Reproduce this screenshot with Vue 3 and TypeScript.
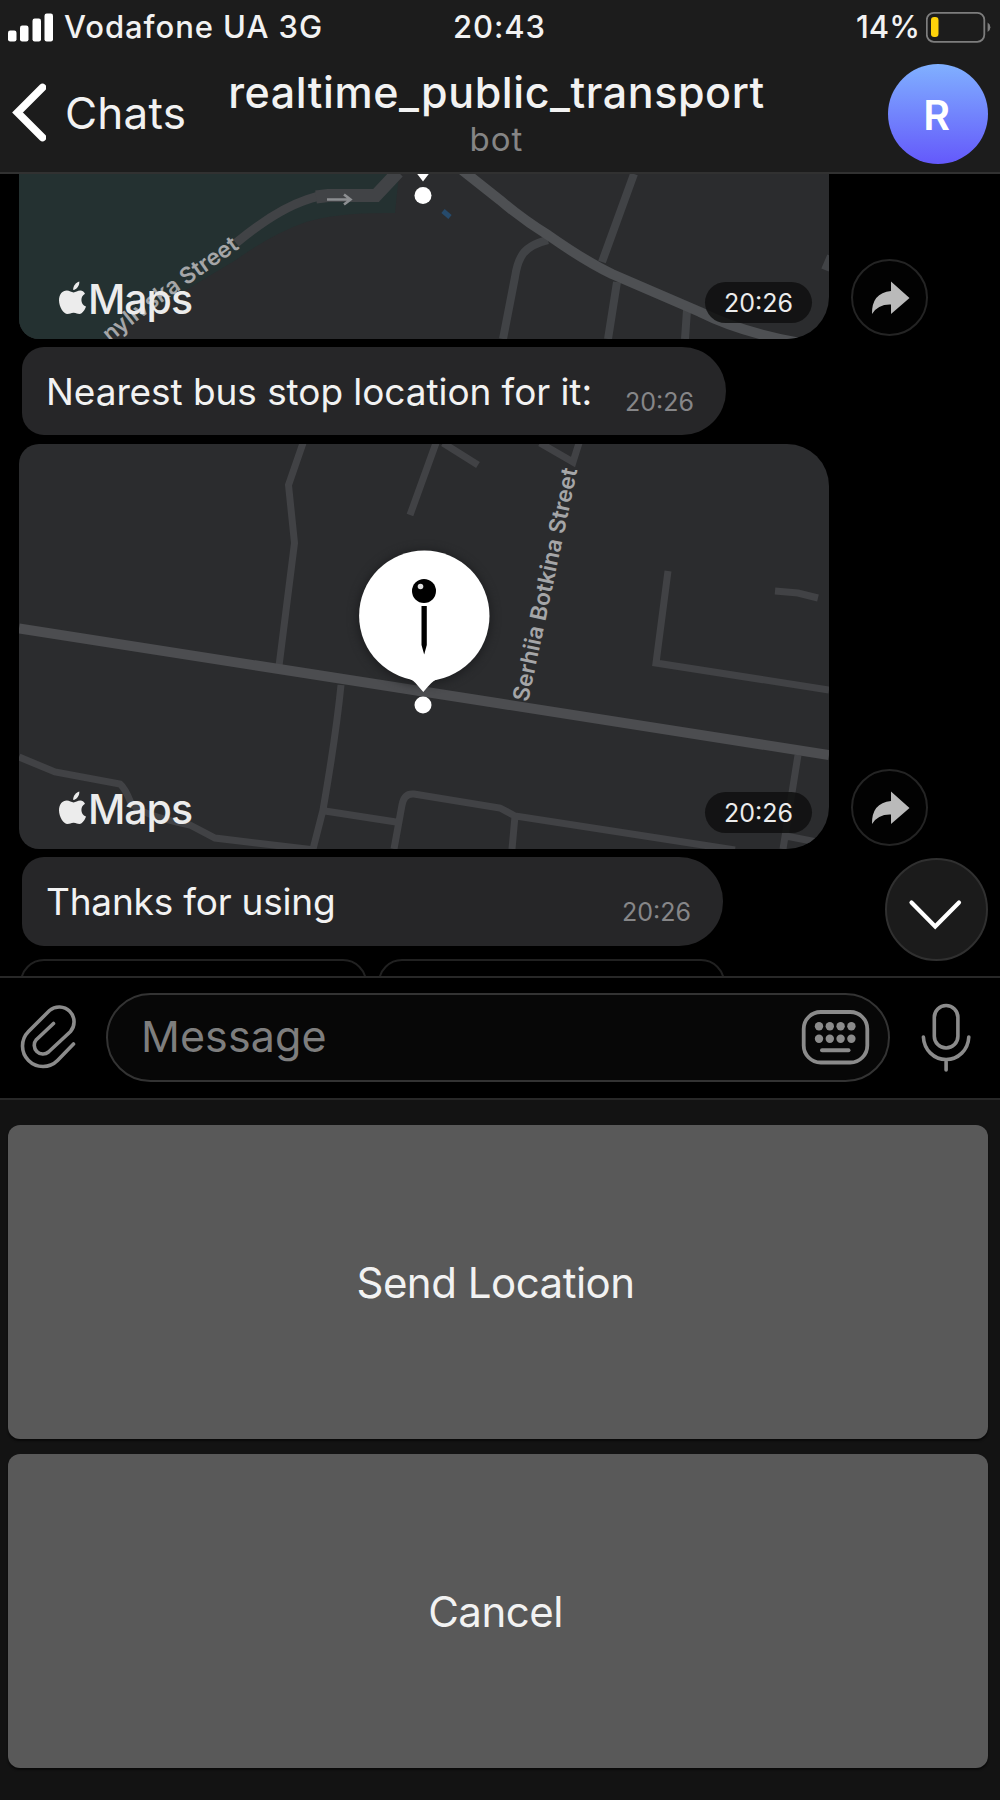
<script setup lang="ts">
interface KeyboardButton {
  id: string
  label: string
}

const keyboard: KeyboardButton[] = [
  { id: 'send', label: 'Send Location' },
  { id: 'cancel', label: 'Cancel' },
]

const keyDots: { x: number; y: number }[] = [1025.3, 1037.7].flatMap((y) =>
  [819, 829.8, 840.6, 851.4].map((x) => ({ x, y })),
)

const applePath =
  'M80.5 290.5C77.5 290.5 75.5 292.4 73.6 292.4C71.5 292.4 69.4 290.5 66.8 290.5C62.5 290.5 59 294.2 59 300.3C59 307.2 63.6 314 67.5 314C69.8 314 70.8 312.7 73.6 312.7C76.4 312.7 77.2 314 79.5 314C82.4 314 85 309.6 86 306.6C82.9 305.3 81.4 302.9 81.4 300C81.4 297.2 82.8 295.1 85 293.7C83.8 291.6 82.2 290.5 80.5 290.5ZM73.2 290C73 286 75.8 282.3 79.3 281.4C79.7 285.4 76.8 289.5 73.2 290Z'
</script>

<template>
  <div class="phone">
    <header class="top">
      <div class="status">
        <div class="carrier">
          <svg class="signal" width="46" height="29" viewBox="8 12 46 29">
            <rect x="8" y="29.5" width="8.5" height="11" rx="2.2" />
            <rect x="20" y="24.5" width="8.5" height="16" rx="2.2" />
            <rect x="32.5" y="17.5" width="8.5" height="23" rx="2.2" />
            <rect x="44.5" y="12.5" width="8.5" height="28" rx="2.2" />
          </svg>
          <span class="carrier-name">Vodafone UA 3G</span>
        </div>
        <span class="clock">20:43</span>
        <div class="power">
          <span class="percent">14%</span>
          <svg width="65" height="32" viewBox="926 10 65 32">
            <rect x="926.8" y="11.8" width="57.5" height="29" rx="7" fill="none" stroke="#7d7d7d" stroke-width="1.8" />
            <rect x="931" y="16" width="7.5" height="20" rx="3.2" fill="#fdd20a" />
            <path d="M987.6 21.5Q990.4 23 990.4 26.2Q990.4 29.5 987.6 31Z" fill="#7d7d7d" />
          </svg>
        </div>
      </div>
      <nav class="nav">
        <a class="back">
          <svg width="34" height="60" viewBox="12 84 34 60">
            <path d="M42.5 88.5L17.5 113.500L42.5 138.500" fill="none" stroke="#fff" stroke-width="7.6" stroke-linecap="round" />
          </svg>
          <span class="back-label">Chats</span>
        </a>
        <div class="heading">
          <div class="title">realtime_public_transport</div>
          <div class="subtitle">bot</div>
        </div>
        <div class="avatar">R</div>
      </nav>
    </header>

    <main class="chat">
      <div class="row">
        <div class="map map-first">
          <svg width="810" height="165" viewBox="19 174 810 165">
            <rect x="19" y="174" width="810" height="165" fill="#2b2c2e" />
            <path d="M19 174H399L395 213Q340 212 306 222Q270 235 236 260L104 339H19Z" fill="#243131" />
            <g fill="none" stroke="#414346" stroke-width="8">
              <path d="M634 174L602 262M548 240Q527 245 521 257Q517 264 515 277L503 339M617 282L608 339M687 310L685 339M831 256L825 270" />
              <path d="M236 243Q276 210 306 200Q316 196 328 195" stroke-width="9" />
              <path d="M316 197L328 195.500H376L398 172" stroke-width="13" />
              <path d="M462 170L500 200Q522 219 548 235Q585 261 612 274L700 312Q740 332 800 343" stroke="#4e5053" stroke-width="10" />
            </g>
            <path d="M327 199.500H350M344 194.500L350.500 199.500L344 204.500" fill="none" stroke="#8c8e91" stroke-width="2.6" />
            <path id="streetLine" d="M50 399L104 348Q148 311 183 288L240 248" fill="none" />
            <text class="street">
              <textPath href="#streetLine" startOffset="100%" text-anchor="end">nylivska Street</textPath>
            </text>
            <path d="M443 211L450 217" stroke="#264a6b" stroke-width="5" />
            <path d="M416.500 173H429.500L423 181.500Z" fill="#fff" />
            <circle cx="423" cy="195.500" r="8.500" fill="#fff" />
            <path :d="applePath" fill="#ececec" />
            <text class="maps" x="88" y="314" textLength="105">Maps</text>
          </svg>
          <span class="pill">20:26</span>
        </div>
        <button class="share">
          <svg width="40" height="36" viewBox="870 278 40 36">
            <path d="M891 279.500L909.500 296L891 312V302.500Q878 302 872 312Q871.500 291 891 289Z" fill="#bababa" />
          </svg>
        </button>
      </div>

      <div class="bubble nearest">
        <span class="text">Nearest bus stop location for it:</span>
        <span class="time">20:26</span>
      </div>

      <div class="row">
        <div class="map map-second">
          <svg width="810" height="405" viewBox="19 444 810 405">
            <rect x="19" y="444" width="810" height="405" fill="#2b2c2e" />
            <g fill="none" stroke="#414245" stroke-width="7">
              <path d="M303 443L288.500 485L294.500 543L279 666M436 443L410 515M443 443L478 465M540 443L573 462L579 443" />
              <path d="M668 571L656 663L829 690M775 591L798 593L818 598" />
              <path d="M341 685Q336 735 323 810L313 849M325 811L396 822M394 849L402 805Q404 793 414 794L500 808L515 816L735 850M515 816L512 849" />
              <path d="M19 757L55 772L120 784Q125 788 131 803Q140 815 190 825L215 838L315 850M798 755L783 849M786 836L822 843" />
              <path d="M19 628.500L500 703.500L829 755" stroke="#4c4d50" stroke-width="10" />
            </g>
            <text class="street" textLength="238" transform="translate(528 702.500) rotate(-78)">Serhiia Botkina Street</text>
            <circle class="pin-shadow" cx="424" cy="617" r="67" />
            <circle cx="424.300" cy="615.700" r="65.200" fill="#fff" />
            <path d="M406 677Q414 680 418.500 686.500L423.300 692L428 686.500Q433 680 442 677Z" fill="#fff" />
            <circle cx="423" cy="705" r="8.500" fill="#fff" />
            <circle cx="424" cy="591" r="12" />
            <circle cx="420.500" cy="586.500" r="2.800" fill="#ddd" />
            <path d="M421.500 606H426.800V645L424.200 654.500L421.500 645Z" />
            <path :d="applePath" fill="#ececec" transform="translate(0 510)" />
            <text class="maps" x="88" y="824" textLength="105">Maps</text>
          </svg>
          <span class="pill">20:26</span>
        </div>
        <button class="share">
          <svg width="40" height="36" viewBox="870 278 40 36">
            <path d="M891 279.500L909.500 296L891 312V302.500Q878 302 872 312Q871.500 291 891 289Z" fill="#bababa" />
          </svg>
        </button>
      </div>

      <div class="bubble thanks">
        <span class="text">Thanks for using</span>
        <span class="time">20:26</span>
      </div>

      <div class="inline-keys">
        <div class="inline-key"></div>
        <div class="inline-key"></div>
      </div>

      <button class="scroll-down">
        <svg width="56" height="34" viewBox="907 896 56 34">
          <path d="M911.500 901.500L935.200 925.500L959 901.500" fill="none" stroke="#fff" stroke-width="4.200" stroke-linecap="round" />
        </svg>
      </button>
    </main>

    <div class="composer">
      <svg class="clip" width="106" height="120" viewBox="0 978 106 120">
        <path d="M73.500 1044L57.500 1060.500A20.500 20.500 0 0 1 28.500 1031.500L49.500 1010.500A14.900 14.900 0 0 1 70.500 1031.500L48.500 1052A8.700 8.700 0 0 1 36.300 1039.700L53.500 1023.500" />
      </svg>
      <div class="field">
        <span class="placeholder">Message</span>
        <svg width="70" height="56" viewBox="801 1009 70 56">
          <rect x="803.700" y="1011" width="63.600" height="50.500" rx="17" fill="none" stroke="#8b8b8b" stroke-width="3.800" />
          <circle v-for="(dot, i) in keyDots" :key="i" :cx="dot.x" :cy="dot.y" r="4.200" fill="#8b8b8b" />
          <path d="M822 1049.200H848.500" stroke="#8b8b8b" stroke-width="4" stroke-linecap="round" />
        </svg>
      </div>
      <svg class="mic" width="110" height="120" viewBox="890 978 110 120">
        <rect x="934.300" y="1005.500" width="23.600" height="42.500" rx="11.800" />
        <path d="M923.400 1037C924 1050 934 1059.500 946.100 1059.500C958.200 1059.500 968.200 1050 968.800 1037M946.100 1059.500V1070" />
      </svg>
    </div>

    <section class="keyboard">
      <button v-for="button in keyboard" :key="button.id" class="key" :class="button.id">{{ button.label }}</button>
    </section>
  </div>
</template>

<style>
body {
  margin: 0;
  background: #000;
}
</style>

<style scoped>
.phone {
  width: 1000px;
  height: 1800px;
  overflow: hidden;
  display: flex;
  flex-direction: column;
  background: #000;
  color: #f2f2f2;
  font-family: Inter, "Liberation Sans", sans-serif;
}
svg {
  display: block;
  flex: none;
}
button {
  margin: 0;
  padding: 0;
  border: 0;
  color: inherit;
  font-family: inherit;
}
.top {
  height: 172px;
  flex: none;
  background: #1c1c1c;
  border-bottom: 2px solid #313131;
}
.status {
  height: 54px;
  padding: 0 9px 0 8px;
  display: grid;
  grid-template-columns: 1fr auto 1fr;
  align-items: center;
  font-size: 31px;
  line-height: 54px;
  white-space: nowrap;
}
.carrier,
.power {
  display: flex;
  align-items: center;
}
.carrier {
  gap: 10px;
}
.carrier-name {
  font-weight: 450;
  letter-spacing: 0.95px;
}
.clock {
  font-weight: 500;
  letter-spacing: 0.9px;
}
.percent {
  font-weight: 450;
}
.signal {
  fill: #fff;
}
.power {
  justify-content: flex-end;
  gap: 6px;
}
.nav {
  height: 118px;
  display: grid;
  grid-template-columns: 220px 553px 227px;
}
.back {
  height: 118px;
  display: flex;
  align-items: center;
  padding-left: 12px;
  gap: 19px;
  font-size: 44px;
  letter-spacing: 0.2px;
}
.heading {
  padding-top: 13px;
  text-align: center;
  white-space: nowrap;
}
.title {
  font-size: 43px;
  font-weight: 500;
  line-height: 50px;
  letter-spacing: 0.58px;
}
.subtitle {
  font-size: 33px;
  line-height: 45px;
  letter-spacing: 1px;
  color: #858585;
}
.avatar {
  width: 100px;
  height: 100px;
  margin: 10px 0 0 115px;
  padding-right: 3px;
  box-sizing: border-box;
  border-radius: 50%;
  background: linear-gradient(#80b0ff, #6459fb);
  color: #fff;
  font-size: 41px;
  font-weight: 600;
  line-height: 103px;
  text-align: center;
}
.chat {
  position: relative;
  height: 802px;
  flex: none;
  overflow: hidden;
}
.row {
  display: flex;
  align-items: flex-end;
  padding-left: 19px;
  gap: 22px;
}
.map {
  position: relative;
  overflow: hidden;
}
.map-first {
  border-radius: 0 0 42px 20px;
}
.map-second {
  border-radius: 20px 42px 42px 20px;
}
.street {
  fill: #a5a6a8;
  font-size: 22.5px;
  font-weight: 600;
}
.maps {
  fill: #ececec;
  font-size: 41px;
  font-weight: 450;
}
.pin-shadow {
  fill: #1d1e20;
  filter: blur(5px);
}
.pill {
  position: absolute;
  right: 17px;
  bottom: 16px;
  width: 107px;
  height: 41px;
  border-radius: 21px;
  background: rgba(15, 15, 15, 0.85);
  color: #ececec;
  font-size: 25px;
  line-height: 43px;
  text-align: center;
}
.share {
  width: 77px;
  height: 77px;
  margin-bottom: 3px;
  box-sizing: border-box;
  border: 2px solid #242424;
  border-radius: 50%;
  background: #020202;
  display: grid;
  place-items: center;
}
.bubble {
  margin: 8px 0 9px 22px;
  width: 704px;
  height: 88px;
  padding: 0 32px 0 24px;
  box-sizing: border-box;
  border-radius: 22px 44px 44px 22px;
  background: #262628;
  display: flex;
  justify-content: space-between;
  white-space: nowrap;
}
.thanks {
  width: 701px;
  height: 89px;
  margin-bottom: 13px;
}
.text {
  font-size: 37px;
  line-height: 89px;
  letter-spacing: -0.07px;
}
.thanks .text {
  letter-spacing: -0.2px;
}
.time {
  font-size: 25px;
  line-height: 110px;
  color: #868688;
}
.inline-keys {
  display: flex;
  gap: 11px;
  margin-left: 20px;
}
.inline-key {
  width: 347px;
  height: 80px;
  box-sizing: border-box;
  border: 2px solid #212121;
  border-radius: 24px;
}
.scroll-down {
  position: absolute;
  right: 12px;
  top: 684px;
  width: 103px;
  height: 103px;
  border: 2px solid #303030;
  box-sizing: border-box;
  border-radius: 50%;
  background: #1b1b1b;
  display: flex;
  align-items: center;
  justify-content: center;
  padding: 8px 3px 0 0;
}
.composer {
  height: 120px;
  flex: none;
  border-top: 2px solid #282828;
  border-bottom: 2px solid #282828;
  display: flex;
  align-items: center;
  background: #000;
}
.clip,
.mic {
  fill: none;
  stroke: #8b8b8b;
  stroke-width: 3.6;
  stroke-linecap: round;
}
.field {
  width: 784px;
  height: 89px;
  margin-bottom: 1px;
  box-sizing: border-box;
  border: 2px solid #333;
  border-radius: 45px;
  background: #070707;
  display: flex;
  align-items: center;
  justify-content: space-between;
  padding: 0 17px 0 33px;
}
.placeholder {
  padding-bottom: 3px;
  color: #7e7e7e;
  font-size: 43px;
  letter-spacing: 0.1px;
}
.keyboard {
  flex: 1;
  padding: 25px 12px 0 8px;
  background: #131313;
}
.key {
  display: block;
  width: 980px;
  height: 314px;
  margin-bottom: 15px;
  padding-right: 5px;
  border-radius: 12px;
  background: #595959;
  box-shadow: 0 2px 2px #090909;
  font-size: 42px;
  letter-spacing: -0.5px;
}
</style>
